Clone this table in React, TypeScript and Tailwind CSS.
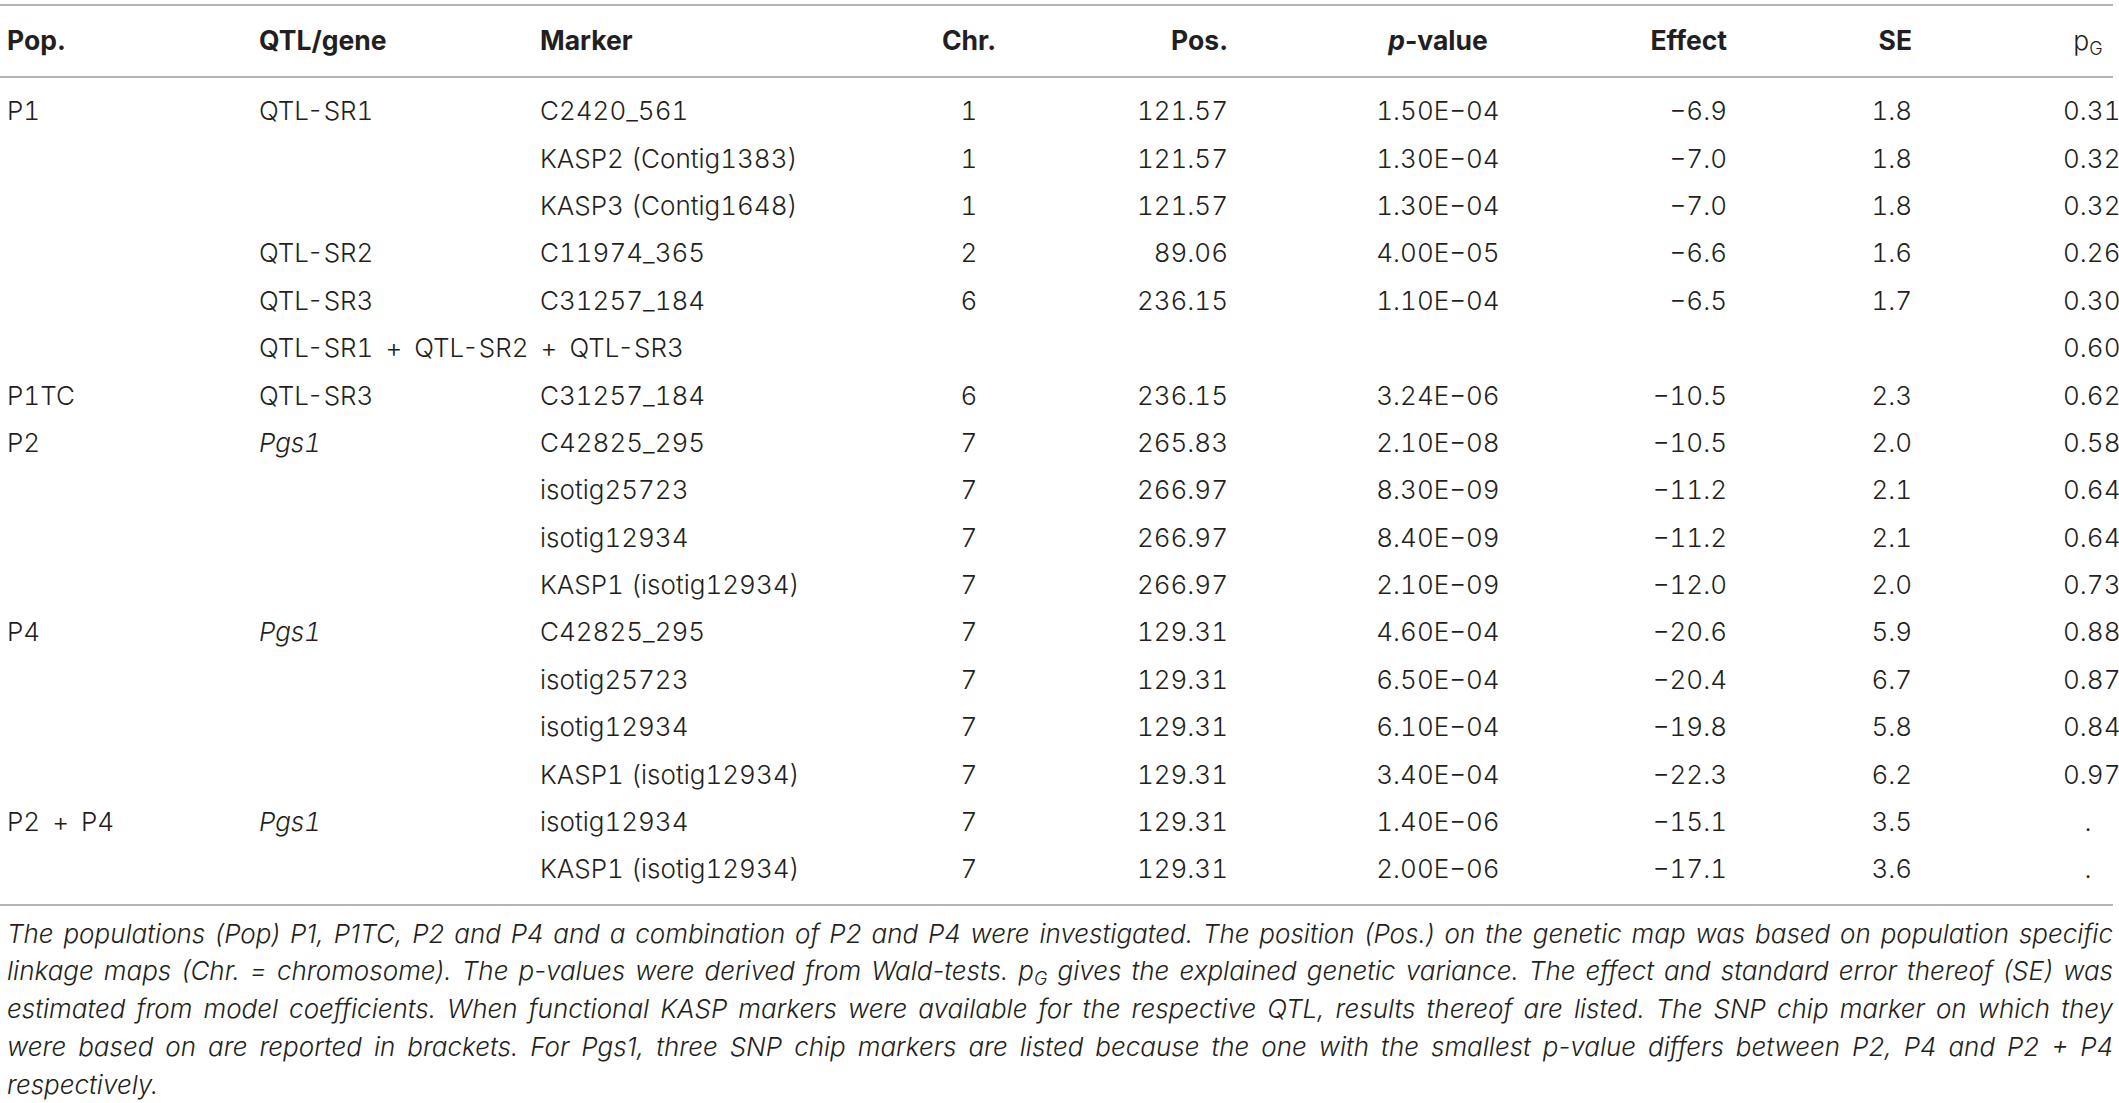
const MINUS = "\u2212";

type Row = {
  pop?: string;
  qtl?: string;
  qtlItalic?: boolean;
  span?: boolean;
  marker?: string;
  chr?: string;
  pos?: string;
  p?: string;
  effect?: string;
  se?: string;
  pg: string;
};

const rows: Row[] = [
  { pop: "P1", qtl: "QTL-SR1", marker: "C2420_561", chr: "1", pos: "121.57", p: `1.50E${MINUS}04`, effect: `${MINUS}6.9`, se: "1.8", pg: "0.31" },
  { marker: "KASP2 (Contig1383)", chr: "1", pos: "121.57", p: `1.30E${MINUS}04`, effect: `${MINUS}7.0`, se: "1.8", pg: "0.32" },
  { marker: "KASP3 (Contig1648)", chr: "1", pos: "121.57", p: `1.30E${MINUS}04`, effect: `${MINUS}7.0`, se: "1.8", pg: "0.32" },
  { qtl: "QTL-SR2", marker: "C11974_365", chr: "2", pos: "89.06", p: `4.00E${MINUS}05`, effect: `${MINUS}6.6`, se: "1.6", pg: "0.26" },
  { qtl: "QTL-SR3", marker: "C31257_184", chr: "6", pos: "236.15", p: `1.10E${MINUS}04`, effect: `${MINUS}6.5`, se: "1.7", pg: "0.30" },
  { span: true, pg: "0.60" },
  { pop: "P1TC", qtl: "QTL-SR3", marker: "C31257_184", chr: "6", pos: "236.15", p: `3.24E${MINUS}06`, effect: `${MINUS}10.5`, se: "2.3", pg: "0.62" },
  { pop: "P2", qtl: "Pgs1", qtlItalic: true, marker: "C42825_295", chr: "7", pos: "265.83", p: `2.10E${MINUS}08`, effect: `${MINUS}10.5`, se: "2.0", pg: "0.58" },
  { marker: "isotig25723", chr: "7", pos: "266.97", p: `8.30E${MINUS}09`, effect: `${MINUS}11.2`, se: "2.1", pg: "0.64" },
  { marker: "isotig12934", chr: "7", pos: "266.97", p: `8.40E${MINUS}09`, effect: `${MINUS}11.2`, se: "2.1", pg: "0.64" },
  { marker: "KASP1 (isotig12934)", chr: "7", pos: "266.97", p: `2.10E${MINUS}09`, effect: `${MINUS}12.0`, se: "2.0", pg: "0.73" },
  { pop: "P4", qtl: "Pgs1", qtlItalic: true, marker: "C42825_295", chr: "7", pos: "129.31", p: `4.60E${MINUS}04`, effect: `${MINUS}20.6`, se: "5.9", pg: "0.88" },
  { marker: "isotig25723", chr: "7", pos: "129.31", p: `6.50E${MINUS}04`, effect: `${MINUS}20.4`, se: "6.7", pg: "0.87" },
  { marker: "isotig12934", chr: "7", pos: "129.31", p: `6.10E${MINUS}04`, effect: `${MINUS}19.8`, se: "5.8", pg: "0.84" },
  { marker: "KASP1 (isotig12934)", chr: "7", pos: "129.31", p: `3.40E${MINUS}04`, effect: `${MINUS}22.3`, se: "6.2", pg: "0.97" },
  { pop: "P2 + P4", qtl: "Pgs1", qtlItalic: true, marker: "isotig12934", chr: "7", pos: "129.31", p: `1.40E${MINUS}06`, effect: `${MINUS}15.1`, se: "3.5", pg: "." },
  { marker: "KASP1 (isotig12934)", chr: "7", pos: "129.31", p: `2.00E${MINUS}06`, effect: `${MINUS}17.1`, se: "3.6", pg: "." },
];

// columns: Pop | QTL/gene | Marker | Chr. | Pos. | p-value | Effect | SE | spacer | pG
const grid =
  "grid grid-cols-[259px_281px_360px_138px_190px_420px_79px_185px_151px_50px] items-center";

function Plus() {
  return <span className="mx-[12px]">+</span>;
}

function Pop({ text }: { text?: string }) {
  if (text === "P2 + P4") {
    return (
      <>
        P2<Plus />P4
      </>
    );
  }
  return <>{text}</>;
}

export default function App() {
  return (
    <div className="w-[2119px] bg-white pt-[4px] font-['Inter',sans-serif] text-[#231f20]">
      <div className="w-[2113px]">
        {/* Header */}
        <div className="border-t-2 border-b-2 border-[#b5b5b5]">
          <div className={`${grid} h-[70px] text-[26.5px] font-bold`}>
            <div className="pl-[7px]">Pop.</div>
            <div>QTL/gene</div>
            <div>Marker</div>
            <div className="text-center">Chr.</div>
            <div className="text-right">Pos.</div>
            <div className="text-center">
              <span className="italic">p</span>-value
            </div>
            <div className="text-right">Effect</div>
            <div className="text-right">SE</div>
            <div />
            <div className="text-center font-light">
              p<sub className="text-[18px]">G</sub>
            </div>
          </div>
        </div>

        {/* Body */}
        <div className="border-b-2 border-[#b5b5b5] pt-[9px] pb-[11px] text-[26px] font-light tabular-nums">
          {rows.map((r, i) => (
            <div key={i} className={`${grid} h-[47.4px]`}>
              <div className="pl-[7px] whitespace-nowrap">
                <Pop text={r.pop} />
              </div>
              {r.span ? (
                <div className="col-span-7 whitespace-nowrap">
                  QTL-SR1<Plus />QTL-SR2<Plus />QTL-SR3
                </div>
              ) : (
                <>
                  <div className={r.qtlItalic ? "italic" : ""}>{r.qtl}</div>
                  <div className="whitespace-nowrap">{r.marker}</div>
                  <div className="text-center">{r.chr}</div>
                  <div className="text-right">{r.pos}</div>
                  <div className="text-center">{r.p}</div>
                  <div className="text-right whitespace-nowrap">{r.effect}</div>
                  <div className="text-right">{r.se}</div>
                </>
              )}
              <div />
              <div className="text-center">{r.pg}</div>
            </div>
          ))}
        </div>

        {/* Footnote */}
        <div className="pt-[9px] pl-[7px] text-[26px] font-light italic leading-[37.8px]">
          <div className="text-justify [text-align-last:justify]">
            The populations (Pop) P1, P1TC, P2 and P4 and a combination of P2 and P4 were investigated. The position (Pos.) on the genetic map was based on population specific
          </div>
          <div className="text-justify [text-align-last:justify]">
            linkage maps (Chr. = chromosome). The p-values were derived from Wald-tests. p<sub className="text-[18px]">G</sub> gives the explained genetic variance. The effect and standard error thereof (SE) was
          </div>
          <div className="text-justify [text-align-last:justify]">
            estimated from model coefficients. When functional KASP markers were available for the respective QTL, results thereof are listed. The SNP chip marker on which they
          </div>
          <div className="text-justify [text-align-last:justify]">
            were based on are reported in brackets. For Pgs1, three SNP chip markers are listed because the one with the smallest p-value differs between P2, P4 and P2 + P4
          </div>
          <div>respectively.</div>
        </div>
      </div>
    </div>
  );
}
